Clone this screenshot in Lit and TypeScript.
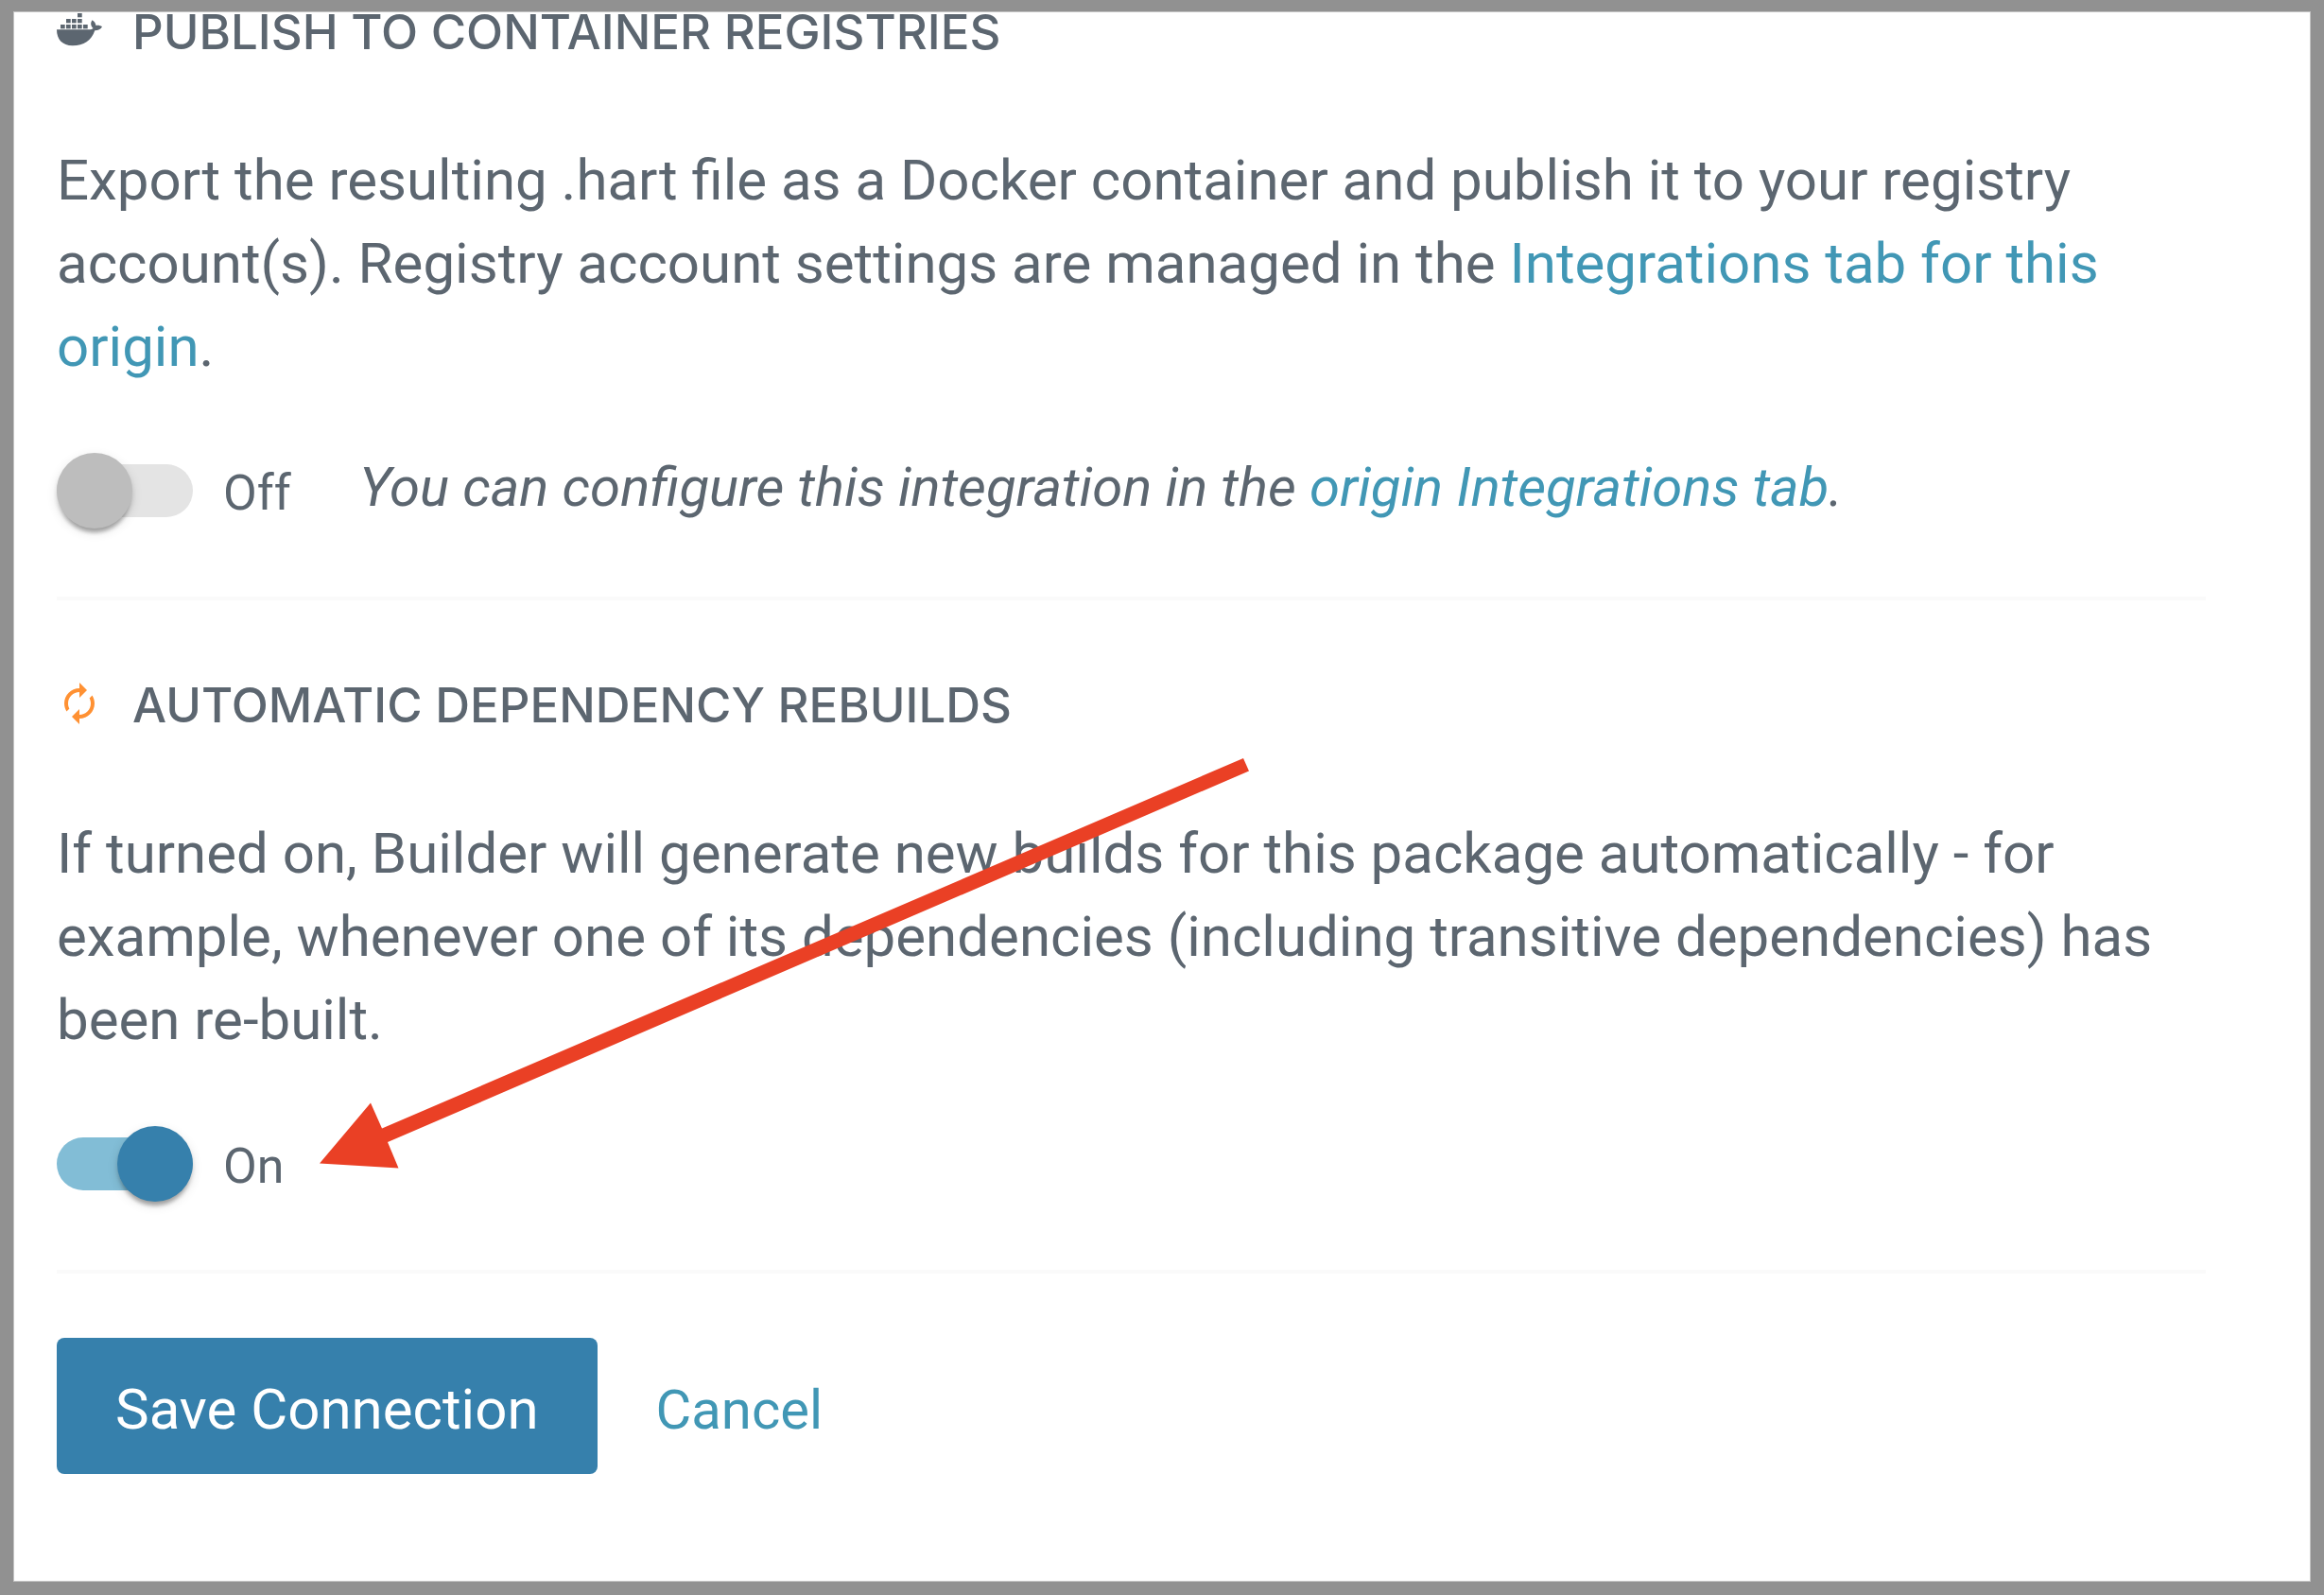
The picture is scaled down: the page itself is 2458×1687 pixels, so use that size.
import { LitElement, html, css, svg } from "lit";
import { customElement, property, state } from "lit/decorators.js";

const dockerIcon = html`<svg class="icon" viewBox="0 0 48 48" aria-hidden="true">
  ${[
    [22, 6], [10, 12], [16, 12], [22, 12],
    [4, 18], [10, 18], [16, 18], [22, 18], [28, 18],
  ].map(([x, y]) => svg`<rect x=${x} y=${y} width="4.7" height="4.3" />`)}
  <path d="M0 23.2H34C36 23.2 37.6 22.7 38.6 21.9C36.4 20.3 35 16.2 37.6 13.2C39.9 14.5 41.2 16.9 41.5 19.1C43.7 18.5 46.2 19.1 48 20.3C46.7 22.9 43.8 24.3 40.3 24.3C36.7 34.8 28.6 40.2 16.8 40.2C6 40.2 0 33.6 0 23.2Z" />
</svg>`;

const rebuildIcon = html`<svg class="icon accent" viewBox="0 0 24 24" aria-hidden="true">
  <path d="M12 6v3l4-4-4-4v3c-4.42 0-8 3.58-8 8 0 1.57.46 3.03 1.24 4.26L6.7 14.8c-.45-.83-.7-1.79-.7-2.8 0-3.31 2.69-6 6-6zm6.76 1.74L17.3 9.2c.44.84.7 1.79.7 2.8 0 3.31-2.69 6-6 6v-3l-4 4 4 4v-3c4.42 0 8-3.58 8-8 0-1.57-.46-3.03-1.24-4.26z" />
</svg>`;

@customElement("slide-toggle")
export class SlideToggle extends LitElement {
  @property({ type: Boolean }) on = false;
  @property() name = "";

  static styles = css`
    :host {
      display: block;
      flex: none;
    }
    .toggle {
      display: flex;
      align-items: center;
      gap: 32px;
      cursor: pointer;
    }
    .switch {
      appearance: none;
      display: block;
      width: 144px;
      height: 56px;
      margin: 12px 0;
      border-radius: 28px;
      background: #e4e4e4;
      cursor: pointer;
    }
    .switch::before {
      content: "";
      display: block;
      width: 80px;
      height: 80px;
      transform: translateY(-12px);
      border-radius: 50%;
      background: #bdbdbd;
      box-shadow:
        0 8px 4px -4px rgba(0, 0, 0, 0.2),
        0 4px 4px rgba(0, 0, 0, 0.14),
        0 4px 12px rgba(0, 0, 0, 0.12);
    }
    .switch:checked {
      background: #82bdd6;
    }
    .switch:checked::before {
      margin-left: 64px;
      background: #3680ac;
    }
    .state {
      padding-top: 6px;
      font-size: 52px;
      line-height: 64px;
    }
  `;

  private flip(e: Event) {
    this.on = (e.target as HTMLInputElement).checked;
  }

  render() {
    return html`<label class="toggle">
      <input class="switch" type="checkbox" name=${this.name} .checked=${this.on} @change=${this.flip} />
      <span class="state">${this.on ? "On" : "Off"}</span>
    </label>`;
  }
}

@customElement("app-root")
export class AppRoot extends LitElement {
  @state() private publish = false;
  @state() private rebuild = true;

  static styles = css`
    :host {
      display: flex;
      box-sizing: border-box;
      min-height: 100vh;
      padding: 12px 14px 14px;
      background: #919191;
      color: #5c6670;
      font-family: Roboto, "Liberation Sans", sans-serif;
    }
    .panel {
      flex: 1;
      padding: 0 110px 60px 45px;
      border: 1px solid #c3c3c3;
      background: #fff;
    }
    .section {
      position: relative;
      padding-bottom: 72px;
      border-bottom: 4px solid #fafafa;
    }
    .section + .section {
      margin-top: 90px;
    }
    .heading {
      display: flex;
      align-items: flex-start;
      gap: 32px;
      height: 42px;
      margin: 0;
      font: 500 51px/42px Inter, "Liberation Sans", sans-serif;
      text-transform: uppercase;
    }
    .icon {
      flex: none;
      width: 48px;
      height: 48px;
      margin-top: -5px;
      fill: currentColor;
    }
    .accent {
      color: #ff9133;
    }
    .copy {
      margin: 92px 0 68px;
      font-size: 60px;
      line-height: 88px;
    }
    .row {
      display: flex;
      align-items: center;
      gap: 72px;
    }
    .hint {
      padding-bottom: 8px;
      font-size: 58px;
      line-height: 72px;
      font-style: italic;
    }
    .link {
      color: #4197b5;
      text-decoration: none;
    }
    .actions {
      display: flex;
      gap: 62px;
      margin-top: 68px;
    }
    .button {
      min-height: 144px;
      padding: 8px 0 0;
      border: 0;
      border-radius: 8px;
      background: none;
      color: #4197b5;
      font: 58px/72px Roboto, "Liberation Sans", sans-serif;
      cursor: pointer;
    }
    .primary {
      padding: 8px 62px 0;
      background: #3680ac;
      color: #fff;
      font-size: 60px;
    }
    .arrow {
      position: absolute;
      top: 77px;
      left: 278px;
      width: 984px;
      height: 434px;
      fill: #ea4025;
      pointer-events: none;
    }
  `;

  render() {
    return html`<main class="panel">
      <section class="section">
        <h2 class="heading">${dockerIcon}<span>Publish to container registries</span></h2>
        <p class="copy">
          Export the resulting .hart file as a Docker container and publish it to your registry
          account(s). Registry account settings are managed in the
          <a class="link" href="#integrations">Integrations tab for this origin</a>.
        </p>
        <div class="row">
          <slide-toggle name="publish" .on=${this.publish}></slide-toggle>
          <em class="hint">You can configure this integration in the
            <a class="link" href="#integrations">origin Integrations tab</a>.</em>
        </div>
      </section>
      <section class="section">
        <h2 class="heading">${rebuildIcon}<span>Automatic dependency rebuilds</span></h2>
        <p class="copy">
          If turned on, Builder will generate new builds for this package automatically - for
          example, whenever one of its dependencies (including transitive dependencies) has been
          re-built.
        </p>
        <div class="row">
          <slide-toggle name="rebuild" .on=${this.rebuild}></slide-toggle>
        </div>
        <svg class="arrow" viewBox="0 0 984 434" aria-hidden="true">
          <path d="M0 428.5L54 364.5L66 391.5L977 0L983 13.5L72 406L83.5 433.5Z" />
        </svg>
      </section>
      <div class="actions">
        <button class="button primary" type="submit">Save Connection</button>
        <button class="button" type="button">Cancel</button>
      </div>
    </main>`;
  }
}
